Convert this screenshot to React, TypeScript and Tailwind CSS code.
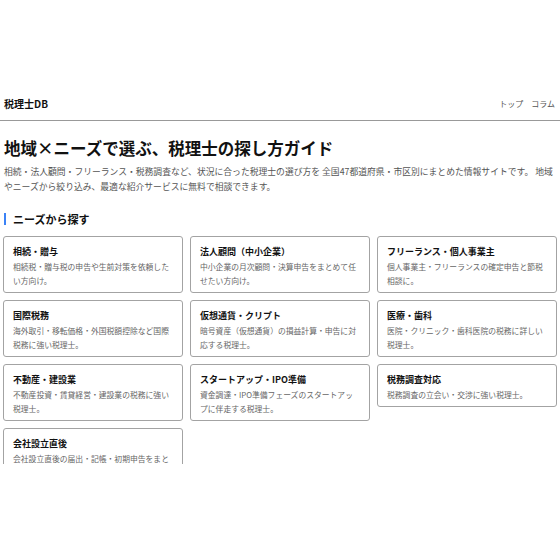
import React from "react";

const cards: { title: string; desc: string }[] = [
  { title: "相続・贈与", desc: "相続税・贈与税の申告や生前対策を依頼したい方向け。" },
  { title: "法人顧問（中小企業）", desc: "中小企業の月次顧問・決算申告をまとめて任せたい方向け。" },
  { title: "フリーランス・個人事業主", desc: "個人事業主・フリーランスの確定申告と節税相談に。" },
  { title: "国際税務", desc: "海外取引・移転価格・外国税額控除など国際税務に強い税理士。" },
  { title: "仮想通貨・クリプト", desc: "暗号資産（仮想通貨）の損益計算・申告に対応する税理士。" },
  { title: "医療・歯科", desc: "医院・クリニック・歯科医院の税務に詳しい税理士。" },
  { title: "不動産・建設業", desc: "不動産投資・賃貸経営・建設業の税務に強い税理士。" },
  { title: "スタートアップ・IPO準備", desc: "資金調達・IPO準備フェーズのスタートアップに伴走する税理士。" },
  { title: "税務調査対応", desc: "税務調査の立会い・交渉に強い税理士。" },
  { title: "会社設立直後", desc: "会社設立直後の届出・記帳・初期申告をまとめて相談したい方向け。" },
];

export default function App() {
  return (
    <div
      className="w-[560px] h-[560px] bg-white pt-[90px]"
      style={{ fontFamily: '"Noto Sans CJK JP", "Noto Sans", sans-serif' }}
    >
      <div className="h-[374px] overflow-hidden">
        <header className="h-[31px] border-b border-[#999999] flex items-start justify-between pt-[7px] px-[4px]">
          <div className="text-[10px] leading-[13px] font-bold text-[#111]">税理士DB</div>
          <nav className="flex gap-[8px] text-[8px] leading-[13px] text-[#555] pr-[1px]">
            <span>トップ</span>
            <span>コラム</span>
          </nav>
        </header>
        <main className="px-[3px]">
          <h1 className="mt-[16px] pl-[1px] text-[16.5px] leading-[22px] font-bold text-[#111]">
            地域×ニーズで選ぶ、税理士の探し方ガイド
          </h1>
          <p className="mt-[5px] pl-[1px] text-[8.8px] leading-[15px] text-[#555]">
            相続・法人顧問・フリーランス・税務調査など、状況に合った税理士の選び方を 全国47都道府県・市区別にまとめた情報サイトです。 地域やニーズから絞り込み、最適な紹介サービスに無料で相談できます。
          </p>
          <h2 className="mt-[18px] flex items-center gap-[7px] pl-[1px]">
            <span className="w-[2px] h-[12px] bg-[#3b82f6]" />
            <span className="text-[11px] leading-[14px] font-bold text-[#111]">ニーズから探す</span>
          </h2>
          <div className="mt-[10px] grid grid-cols-3 gap-[7px] items-start">
            {cards.map((c) => (
              <div
                key={c.title}
                className="border border-[#a3a3a3] rounded-[3px] px-[9px] pt-[8px] pb-[4px] bg-white"
              >
                <div className="text-[9px] leading-[13px] font-bold text-[#111]">{c.title}</div>
                <div className="mt-[2px] text-[7.8px] leading-[14px] text-[#666]">{c.desc}</div>
              </div>
            ))}
          </div>
        </main>
      </div>
    </div>
  );
}
